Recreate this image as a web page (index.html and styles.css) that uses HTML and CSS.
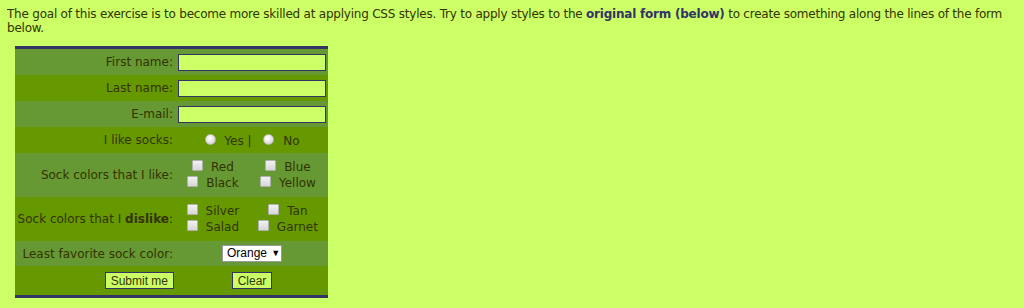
FILE: index.html
```html
<!DOCTYPE html>
<html>
<head>
<meta charset="utf-8">
<link rel="stylesheet" href="styles.css">
</head>
<body>
<p class="intro">The goal of this exercise is to become more skilled at applying CSS styles. Try to apply styles to the <a class="link" href="#">original form (below)</a> to create something along the lines of the form below.</p>
<form class="sockform">
  <div class="row light h26">
    <label class="lbl">First name:</label>
    <div class="val"><input class="txt" type="text"></div>
  </div>
  <div class="row dark h26">
    <label class="lbl">Last name:</label>
    <div class="val"><input class="txt" type="text"></div>
  </div>
  <div class="row light h26">
    <label class="lbl">E-mail:</label>
    <div class="val"><input class="txt" type="text"></div>
  </div>
  <div class="row dark h26">
    <label class="lbl">I like socks:</label>
    <div class="val center"><span class="radios"><input class="rad" type="radio" name="s"> Yes | <input class="rad rad2" type="radio" name="s"> No</span></div>
  </div>
  <div class="row light h44">
    <label class="lbl">Sock colors that I like:</label>
    <div class="val">
      <div class="checks">
        <span class="ck"><input class="cb" type="checkbox"> Red</span>
        <span class="ck"><input class="cb" type="checkbox"> Blue</span>
        <span class="ck"><input class="cb" type="checkbox"> Black</span>
        <span class="ck"><input class="cb" type="checkbox"> Yellow</span>
      </div>
    </div>
  </div>
  <div class="row dark h44">
    <label class="lbl">Sock colors that I <b>dislike</b>:</label>
    <div class="val">
      <div class="checks">
        <span class="ck"><input class="cb" type="checkbox"> Silver</span>
        <span class="ck"><input class="cb" type="checkbox"> Tan</span>
        <span class="ck"><input class="cb" type="checkbox"> Salad</span>
        <span class="ck"><input class="cb" type="checkbox"> Garnet</span>
      </div>
    </div>
  </div>
  <div class="row light h25">
    <label class="lbl">Least favorite sock color:</label>
    <div class="val center"><span class="sel">Orange <span class="arrow">&#9660;</span></span></div>
  </div>
  <div class="row dark h29">
    <div class="lbl"><button class="btn" type="button">Submit me</button></div>
    <div class="val center"><button class="btn" type="button">Clear</button></div>
  </div>
</form>
</body>
</html>
```
FILE: styles.css
```css
html, body {
  background: #ccff66;
}
body {
  margin: 7px;
  font-family: "DejaVu Sans", Verdana, sans-serif;
  font-size: 12px;
  color: #333300;
}
.intro {
  margin: 0 0 11px 0;
  line-height: 14px;
  letter-spacing: -0.22px;
}
.link {
  color: #333366;
  font-weight: bold;
  text-decoration: none;
}
.sockform {
  margin: 0 0 0 8px;
  width: 313px;
  border-top: 3px solid #333366;
  border-bottom: 3px solid #333366;
}
.row {
  display: grid;
  grid-template-columns: 161px 152px;
  align-items: center;
}
.light { background: #669933; }
.dark { background: #669900; }
.h26 { height: 26px; }
.h44 { height: 44px; }
.h25 { height: 25px; }
.h29 { height: 29px; }
.lbl {
  text-align: right;
  padding-right: 3px;
  white-space: nowrap;
}
.val {
  padding-left: 2px;
}
.center {
  text-align: center;
  padding-left: 0;
}
.txt {
  display: block;
  box-sizing: border-box;
  width: 148px;
  height: 17px;
  margin: 0;
  padding: 0 2px;
  border: 1px solid #333366;
  background: #ccff66;
}
.radios {
  position: relative;
  top: 1px;
}
.rad {
  -webkit-appearance: none;
  appearance: none;
  width: 11px;
  height: 11px;
  margin: 0 5px 0 0;
  border-radius: 50%;
  background: radial-gradient(circle at 40% 35%, #ffffff 0, #eeeeee 35%, #c8c8c8 100%);
  border: 1px solid #b8b8b8;
  vertical-align: middle;
  position: relative;
  top: -2px;
}
.rad2 { margin-left: 8px; }
.checks {
  display: grid;
  grid-template-columns: 74px 76px;
  grid-auto-rows: 16px;
  justify-items: center;
  align-items: center;
  margin-left: -2px;
}
.ck {
  white-space: nowrap;
}
.cb {
  -webkit-appearance: none;
  appearance: none;
  box-sizing: border-box;
  width: 11px;
  height: 11px;
  margin: 0 4px 0 0;
  border: 1px solid #b0b0b0;
  border-radius: 1px;
  background: linear-gradient(#f2f2f2, #d6d6d6);
  position: relative;
  top: -2px;
  vertical-align: middle;
}
.sel {
  display: inline-block;
  box-sizing: border-box;
  width: 60px;
  height: 17px;
  background: #ffffff;
  border: 1px solid #999999;
  font-family: "Liberation Sans", Arial, sans-serif;
  font-size: 12px;
  line-height: 15px;
  color: #000000;
  text-align: left;
  padding-left: 4px;
  vertical-align: middle;
}
.arrow {
  font-size: 9px;
  vertical-align: 1px;
  margin-left: 1px;
}
.btn {
  font-family: "Liberation Sans", Arial, sans-serif;
  font-size: 12px;
  color: #333300;
  background: #ccff66;
  border: 1px solid #333366;
  padding: 0 5px;
  height: 17px;
  line-height: 14px;
  margin: 0;
}
.lbl .btn { margin-right: -1px; }
```
